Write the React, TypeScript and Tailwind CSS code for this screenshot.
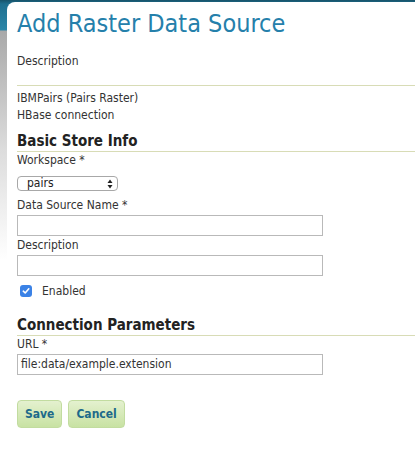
import { useState } from "react";

const font = { fontFamily: '"DejaVu Sans Condensed", "DejaVu Sans", Verdana, sans-serif' };

function SectionTitle({ children }: { children: string }) {
  return (
    <div className="border-b border-[#d8dcb6] pb-[1px]">
      <h3 className="text-[15px] font-bold leading-[18px] text-[#222]">{children}</h3>
    </div>
  );
}

function Label({ children }: { children: string }) {
  return <div className="text-[12px] leading-[16px] text-[#333]">{children}</div>;
}

function TextInput({ value = "" }: { value?: string }) {
  return (
    <div className="w-[306px] h-[21px] border border-[#b9b9b9] bg-white px-[3px] text-[12px] leading-[19px] text-[#333]">
      {value}
    </div>
  );
}

export default function App() {
  const [enabled, setEnabled] = useState(true);

  return (
    <div
      className="w-[415px] h-[455px] overflow-hidden flex bg-[linear-gradient(to_bottom,#17536a_0px,#1e6f8f_4px,#2b86a8_30px,#a9a9a9_31px,#dcdcdc_150px,#ffffff_260px)]"
      style={font}
    >
      <div className="w-[7px] shrink-0" />
      <div className="flex-1 mt-[2px] bg-white rounded-tl-[8px] pl-[10px] pt-[6px]">
        <h1 className="text-[25px] leading-[32px] text-[#2580ab]">Add Raster Data Source</h1>

        <div className="mt-[13px] text-[12px] leading-[16px] text-[#333]">Description</div>
        <div className="mt-[16px] border-b border-[#d8dcb6]" />

        <div className="mt-[4px] text-[12px] leading-[17px] text-[#333]">IBMPairs (Pairs Raster)</div>
        <div className="text-[12px] leading-[17px] text-[#333]">HBase connection</div>

        <div className="mt-[8px]">
          <SectionTitle>Basic Store Info</SectionTitle>
        </div>

        <Label>Workspace *</Label>
        <div className="mt-[8px] w-[101px] h-[15px] rounded-[4px] border border-[#a8a8a8] bg-white flex items-center justify-between pl-[9px] pr-[4px]">
          <span className="text-[12px] leading-[13px] text-[#222]">pairs</span>
          <svg width="6" height="10" viewBox="0 0 6 10">
            <path d="M3 0.5 L5.5 4 L0.5 4 Z" fill="#222" />
            <path d="M3 9.5 L5.5 6 L0.5 6 Z" fill="#222" />
          </svg>
        </div>

        <div className="mt-[6px]">
          <Label>Data Source Name *</Label>
        </div>
        <div className="mt-[2px]">
          <TextInput />
        </div>
        <div className="mt-[1px]">
          <Label>Description</Label>
        </div>
        <div className="mt-[2px]">
          <TextInput />
        </div>

        <label className="mt-[7px] flex items-center gap-[10px] pl-[3px] cursor-pointer" onClick={() => setEnabled(!enabled)}>
          <span
            className={
              enabled
                ? "w-[12px] h-[12px] rounded-[3px] bg-[#3b82e6] flex items-center justify-center"
                : "w-[12px] h-[12px] rounded-[3px] border border-[#999] bg-white"
            }
          >
            {enabled && (
              <svg width="8" height="8" viewBox="0 0 8 8">
                <path d="M1.3 4.2 L3.2 6 L6.8 1.8" stroke="#fff" strokeWidth="1.6" fill="none" strokeLinecap="round" strokeLinejoin="round" />
              </svg>
            )}
          </span>
          <span className="text-[12px] leading-[16px] text-[#333]">Enabled</span>
        </label>

        <div className="mt-[17px]">
          <SectionTitle>Connection Parameters</SectionTitle>
        </div>
        <Label>URL *</Label>
        <div className="mt-[2px]">
          <TextInput value="file:data/example.extension" />
        </div>

        <div className="mt-[25px] flex gap-[6px]">
          <button className="h-[28px] px-[7px] rounded-[4px] border border-[#c2dca0] bg-[linear-gradient(to_bottom,#e4f1cf,#c8e2a3)] text-[12px] font-bold text-[#1d6a8a]">
            Save
          </button>
          <button className="h-[28px] px-[7px] rounded-[4px] border border-[#c2dca0] bg-[linear-gradient(to_bottom,#e4f1cf,#c8e2a3)] text-[12px] font-bold text-[#1d6a8a]">
            Cancel
          </button>
        </div>
      </div>
    </div>
  );
}
